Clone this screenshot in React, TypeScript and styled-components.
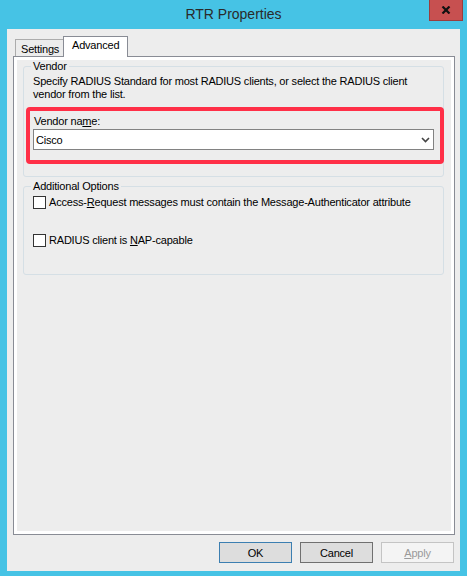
import { FC } from "react";
import styled, { createGlobalStyle } from "styled-components";

const GlobalStyle = createGlobalStyle`
  html, body {
    margin: 0;
    padding: 0;
    background: #46c3e5;
  }
  body {
    font-family: "Liberation Sans", Arial, sans-serif;
  }
`;

const Chevron: FC = () => (
  <svg width="9" height="6" viewBox="0 0 9 6">
    <path d="M1 1 L4.5 4.5 L8 1" fill="none" stroke="#444" strokeWidth="1.6" />
  </svg>
);

const CloseGlyph: FC = () => (
  <svg width="10" height="8" viewBox="0 0 10 8">
    <path d="M1.5 0.5 L8.5 7.5 M8.5 0.5 L1.5 7.5" stroke="#111" strokeWidth="2.2" />
  </svg>
);

export default function App() {
  return (
    <>
      <GlobalStyle />
      <Window>
        <TitleBar>
          <span />
          <Title>RTR Properties</Title>
          <CloseButton aria-label="Close">
            <CloseGlyph />
          </CloseButton>
        </TitleBar>

        <Client>
          <TabStrip>
            <Tab>Settings</Tab>
            <Tab $active>Advanced</Tab>
          </TabStrip>

          <Panel>
            <PanelInner>
              <Group $pb={12}>
                <Legend>Vendor</Legend>
                <Description>
                  Specify RADIUS Standard for most RADIUS clients, or select the RADIUS client
                  <br />
                  vendor from the list.
                </Description>
                <Highlight>
                  <FieldLabel>
                    Vendor na<u>m</u>e:
                  </FieldLabel>
                  <Combo>
                    <span>Cisco</span>
                    <Chevron />
                  </Combo>
                </Highlight>
              </Group>

              <Group $pb={26} $mt={3}>
                <Legend>Additional Options</Legend>
                <CheckRow $mt={0}>
                  <Box />
                  <span>
                    Access-<u>R</u>equest messages must contain the Message-Authenticator attribute
                  </span>
                </CheckRow>
                <CheckRow $mt={23}>
                  <Box />
                  <span>
                    RADIUS client is <u>N</u>AP-capable
                  </span>
                </CheckRow>
              </Group>
            </PanelInner>
          </Panel>

          <ButtonRow>
            <Button $variant="default">OK</Button>
            <Button>Cancel</Button>
            <Button $variant="disabled">
              <u>A</u>pply
            </Button>
          </ButtonRow>
        </Client>
      </Window>
    </>
  );
}

const Window = styled.div`
  width: 467px;
  height: 576px;
  background: #46c3e5;
  display: flex;
  flex-direction: column;
  box-sizing: border-box;
`;

const TitleBar = styled.div`
  height: 29px;
  display: grid;
  grid-template-columns: 1fr auto 1fr;
  align-items: start;
`;

const Title = styled.div`
  font-size: 14px;
  line-height: 29px;
  color: #2a2a2a;
`;

const CloseButton = styled.button`
  justify-self: end;
  width: 34px;
  height: 21px;
  margin: 0 4px 0 0;
  padding: 0;
  border: 1px solid #9a3d3d;
  border-top: none;
  background: #c75050;
  display: flex;
  align-items: center;
  justify-content: center;
`;

const Client = styled.div`
  flex: 1;
  margin: 0 7px 5px 7px;
  background: #ededed;
  padding: 7px 5px 0 6px;
  display: flex;
  flex-direction: column;
  font-size: 11px;
  letter-spacing: -0.2px;
  color: #000;
`;

const TabStrip = styled.div`
  height: 20px;
  display: flex;
  align-items: flex-end;
  padding-left: 2px;
  position: relative;
  z-index: 1;
`;

const Tab = styled.div<{ $active?: boolean }>`
  box-sizing: border-box;
  border: 1px solid ${(p) => (p.$active ? "#898c95" : "#acacac")};
  border-bottom: none;
  background: ${(p) => (p.$active ? "#ffffff" : "#ececec")};
  height: ${(p) => (p.$active ? "21px" : "17px")};
  width: ${(p) => (p.$active ? "65px" : "49px")};
  margin-left: ${(p) => (p.$active ? "-1px" : "0")};
  margin-bottom: ${(p) => (p.$active ? "-1px" : "0")};
  padding: ${(p) => (p.$active ? "1px 0 0 8px" : "2px 0 0 5px")};
  line-height: 14px;
`;

const Panel = styled.div`
  height: 479px;
  box-sizing: border-box;
  border: 1px solid #898c95;
  background: #ffffff;
  padding: 3px;
  display: flex;
`;

const PanelInner = styled.div`
  flex: 1;
  background: #ededed;
  padding: 0 7px 0 6px;
  display: flex;
  flex-direction: column;
`;

const Group = styled.fieldset<{ $pb: number; $mt?: number }>`
  margin: ${(p) => p.$mt ?? 0}px 0 0 0;
  padding: 2px 0 ${(p) => p.$pb}px 9px;
  min-inline-size: 0;
  border: 1px solid #d5dfe5;
  border-radius: 3px;
`;

const Legend = styled.legend`
  margin-left: -2px;
  padding: 0 2px;
  line-height: 13px;
`;

const Description = styled.div`
  line-height: 13px;
  white-space: nowrap;
`;

const Highlight = styled.div`
  margin: 6px -1px 0 -7px;
  border: 4px solid #ff2f47;
  border-radius: 4px;
  padding: 2px 6px 10px 3px;
`;

const FieldLabel = styled.div`
  line-height: 16px;
  padding-left: 1px;
`;

const Combo = styled.div`
  height: 21px;
  box-sizing: border-box;
  border: 1px solid #828282;
  background: #ffffff;
  display: flex;
  align-items: center;
  justify-content: space-between;
  padding: 0 3px 0 2px;
`;

const CheckRow = styled.div<{ $mt?: number }>`
  display: flex;
  align-items: center;
  gap: 3px;
  margin-top: ${(p) => p.$mt ?? 3}px;
  line-height: 15px;
`;

const Box = styled.span`
  width: 13px;
  height: 13px;
  box-sizing: border-box;
  border: 1px solid #333333;
  background: #ffffff;
  flex-shrink: 0;
`;

const ButtonRow = styled.div`
  display: flex;
  justify-content: flex-end;
  gap: 8px;
  padding: 7px 1px 0 0;
`;

const Button = styled.button<{ $variant?: "default" | "disabled" }>`
  width: 73px;
  height: 21px;
  box-sizing: border-box;
  padding: 0;
  font-family: "Liberation Sans", Arial, sans-serif;
  font-size: 11px;
  letter-spacing: -0.2px;
  background: ${(p) => (p.$variant === "disabled" ? "#f4f4f4" : "#dddddd")};
  color: ${(p) => (p.$variant === "disabled" ? "#9a9a9a" : "#000000")};
  border: 1px solid
    ${(p) =>
      p.$variant === "default"
        ? "#3c7fb1"
        : p.$variant === "disabled"
        ? "#c4c4c4"
        : "#707070"};
`;
